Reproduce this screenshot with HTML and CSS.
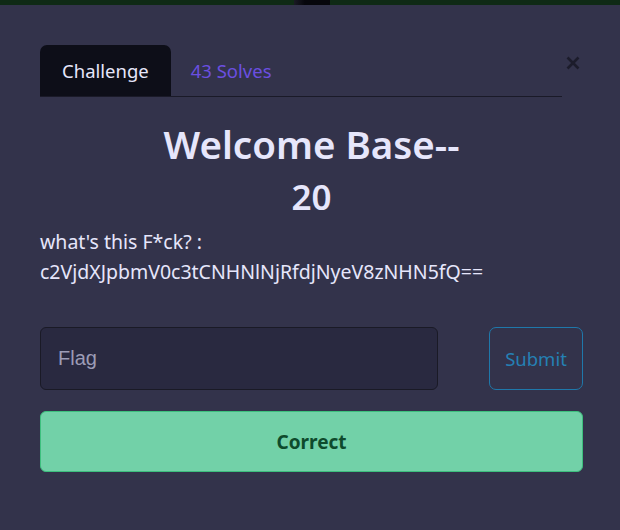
FILE: index.html
```html
<!DOCTYPE html>
<html>
<head>
<meta charset="utf-8">
<link rel="stylesheet" href="styles.css">
</head>
<body>
<div class="topstrip"><span class="seg-green a"></span><span class="seg-dark"></span><span class="seg-green b"></span></div>
<div class="modal">
  <div class="header">
    <nav class="tabs">
      <a class="tab active">Challenge</a>
      <a class="tab solves">43 Solves</a>
    </nav>
    <button class="close" aria-label="Close">
      <svg width="14" height="14" viewBox="0 0 14 14"><path d="M1.5 1.5 L12.5 12.5 M12.5 1.5 L1.5 12.5" stroke="#1c1c2b" stroke-width="2.6" stroke-linecap="butt"/></svg>
    </button>
  </div>
  <h2 class="title">Welcome Base--</h2>
  <h3 class="value">20</h3>
  <p class="desc">what's this F*ck? :<br>c2VjdXJpbmV0c3tCNHNlNjRfdjNyeV8zNHN5fQ==</p>
  <div class="submit-row">
    <input class="flag" type="text" placeholder="Flag">
    <button class="submit">Submit</button>
  </div>
  <div class="result">Correct</div>
</div>
</body>
</html>
```
FILE: styles.css
```css
html, body {
  margin: 0;
  padding: 0;
  background: #33334b;
  font-family: "Noto Sans", "Open Sans", sans-serif;
}
.topstrip {
  display: flex;
  height: 5px;
}
.seg-green { background: #0f2a15; }
.seg-green.a { width: 294px; }
.seg-green.b { flex: 1; }
.seg-dark { width: 36px; background: linear-gradient(90deg, #1a1a24, #06060c 30%, #06060c); }
.modal {
  padding: 40px 37px 0 40px;
}
.header {
  display: flex;
  align-items: flex-start;
}
.tabs {
  flex: 1;
  display: flex;
  align-items: flex-end;
  border-bottom: 1px solid #1a1a28;
  height: 51px;
}
.tab {
  display: block;
  font-size: 18.5px;
  line-height: 25px;
  padding: 13px 22px 13px 22px;
  border-radius: 7px 7px 0 0;
  color: #6b4fe0;
}
.tab.active {
  background: #0d0e18;
  color: #e6e6fb;
}
.tab.solves {
  padding-left: 20px;
}
.close {
  width: 21px;
  height: 21px;
  margin: 7px 0 0 0;
  padding: 0;
  border: 0;
  background: transparent;
  display: flex;
  align-items: center;
  justify-content: center;
}
.title {
  margin: 23px 0 0 0;
  text-align: center;
  font-size: 38.5px;
  line-height: 48px;
  font-weight: 600;
  color: #e6e6fb;
}
.value {
  margin: 7px 0 0 0;
  text-align: center;
  font-size: 35px;
  line-height: 44px;
  font-weight: 600;
  color: #e6e6fb;
}
.desc {
  margin: 8px 0 0 0;
  font-size: 19.5px;
  line-height: 30px;
  color: #e6e6fb;
}
.submit-row {
  display: flex;
  justify-content: space-between;
  margin-top: 40px;
}
.flag {
  box-sizing: border-box;
  width: 398px;
  height: 63px;
  background: #292940;
  border: 1px solid #1a1a26;
  border-radius: 6px;
  padding: 0 17px;
  font-family: "Liberation Sans", Arial, sans-serif;
  font-size: 20px;
  color: #e6e6fb;
  outline: none;
}
.flag::placeholder { color: #9c9cb6; }
.submit {
  box-sizing: border-box;
  width: 94px;
  height: 63px;
  background: transparent;
  border: 1px solid #1f78aa;
  border-radius: 7px;
  color: #2580b4;
  font-family: "Noto Sans", sans-serif;
  font-size: 18.5px;
  padding: 0;
}
.result {
  box-sizing: border-box;
  margin-top: 21px;
  height: 61px;
  background: #72d1a8;
  border: 1px solid #3dc07e;
  border-radius: 6px;
  display: flex;
  align-items: center;
  justify-content: center;
  color: #0e4a2c;
  font-weight: 700;
  font-size: 19px;
}
```
